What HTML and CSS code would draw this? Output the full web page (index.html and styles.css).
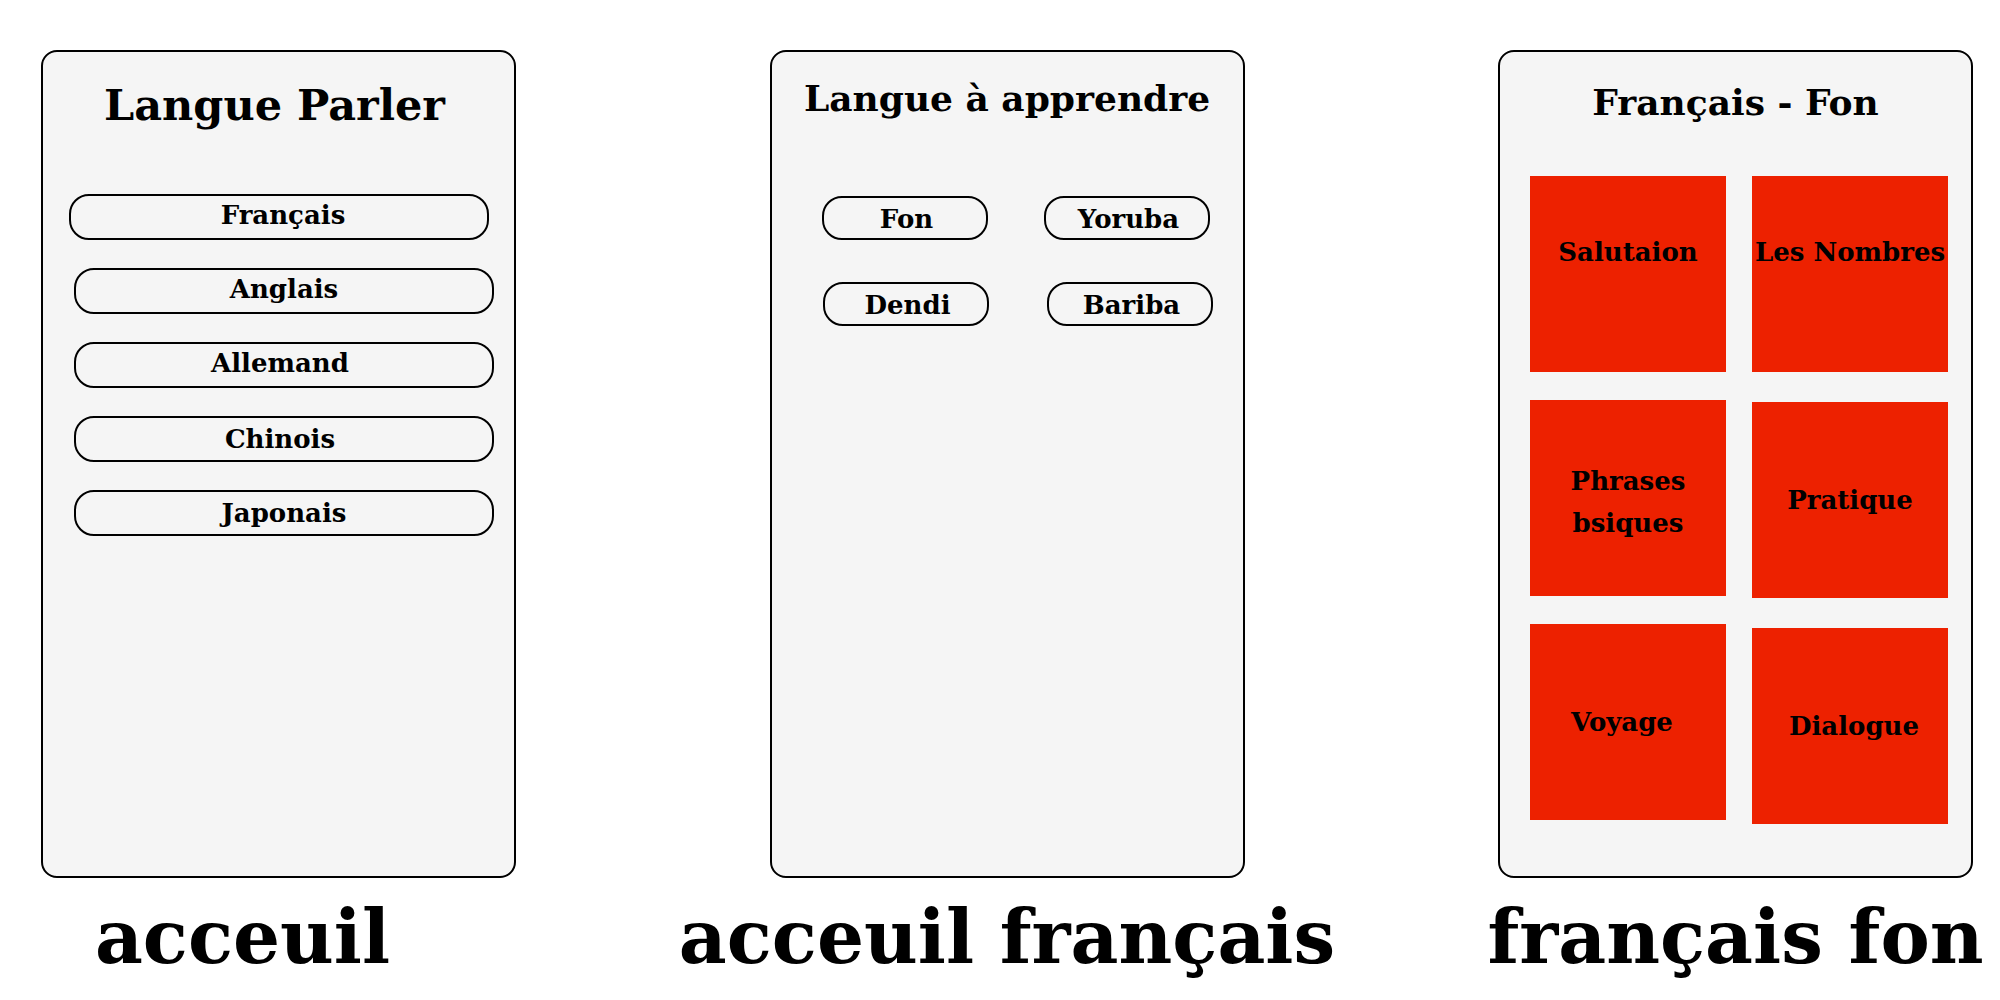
FILE: index.html
```html
<!DOCTYPE html>
<html lang="fr">
<head>
  <meta charset="utf-8">
  <meta name="viewport" content="width=device-width, initial-scale=1">
  <title>acceuil</title>
  <link rel="stylesheet" href="styles.css">
</head>
<body>
  <main class="board">
    <section class="screen">
      <div class="card">
        <h1 class="title title-large">Langue Parler</h1>
        <div class="choices">
          <button type="button" class="pill choice choice-first text-high nudge-right">Français</button>
          <button type="button" class="pill choice text-high">Anglais</button>
          <button type="button" class="pill choice text-high nudge-left">Allemand</button>
          <button type="button" class="pill choice nudge-left">Chinois</button>
          <button type="button" class="pill choice">Japonais</button>
        </div>
      </div>
      <h2 class="caption caption-home">acceuil</h2>
    </section>

    <section class="screen">
      <div class="card">
        <h1 class="title title-learn">Langue à apprendre</h1>
        <div class="languages">
          <button type="button" class="pill language">Fon</button>
          <button type="button" class="pill language">Yoruba</button>
          <button type="button" class="pill language language-end">Dendi</button>
          <button type="button" class="pill language language-end">Bariba</button>
        </div>
      </div>
      <h2 class="caption">acceuil français</h2>
    </section>

    <section class="screen">
      <div class="card">
        <h1 class="title title-lesson">Français - Fon</h1>
        <div class="lessons">
          <div class="lesson-column">
            <button type="button" class="tile tile-raised">Salutaion</button>
            <button type="button" class="tile tile-lines">Phrases<br>bsiques</button>
            <button type="button" class="tile tile-left">Voyage</button>
          </div>
          <div class="lesson-column lesson-column-loose">
            <button type="button" class="tile tile-raised">Les Nombres</button>
            <button type="button" class="tile">Pratique</button>
            <button type="button" class="tile nudge-right">Dialogue</button>
          </div>
        </div>
      </div>
      <h2 class="caption">français fon</h2>
    </section>
  </main>
</body>
</html>
```
FILE: styles.css
```css
* {
  box-sizing: border-box;
}

body {
  margin: 0;
  background: #ffffff;
  color: #000000;
  font-family: Rockwell, "DejaVu Serif", serif;
  font-weight: 700;
}

.board {
  display: grid;
  grid-template-columns: repeat(3, minmax(0, 475px));
  justify-content: space-between;
  padding: 50px 27px 0 41px;
}

.card {
  min-height: 828px;
  border: 2px solid #000000;
  border-radius: 16px;
  background: #f5f5f5;
}

.title {
  margin: 0;
  font-size: 36px;
  line-height: 48px;
  text-align: center;
  white-space: nowrap;
}

.title-large {
  padding: 24px 8px 60px 0;
  font-size: 43px;
  line-height: 58px;
}

.title-learn {
  padding: 22px 0 74px;
}

.title-lesson {
  padding: 26px 0 50px;
}

.caption {
  display: flex;
  justify-content: center;
  margin: 15px 0 0;
  font-size: 74px;
  line-height: 88px;
  white-space: nowrap;
}

.caption-home {
  padding-right: 72px;
}

/* Rounded outline buttons */
.pill {
  display: flex;
  align-items: center;
  justify-content: center;
  padding: 0;
  border: 2px solid #000000;
  border-radius: 20px;
  background: transparent;
  color: inherit;
  font: inherit;
  font-size: 26px;
  line-height: 32px;
}

.choices {
  display: grid;
  gap: 28px;
  margin: 0 20px 0 26px;
}

.choice {
  justify-self: end;
  width: calc(100% - 5px);
  height: 46px;
}

.choice-first {
  justify-self: start;
}

.text-high {
  padding-bottom: 4px;
}

.nudge-right {
  padding-left: 8px;
}

.nudge-left {
  padding-right: 8px;
}

.languages {
  display: grid;
  grid-template-columns: 167fr 169fr;
  gap: 42px 55px;
  margin: 0 30px 0 50px;
}

.language {
  width: 166px;
  max-width: 100%;
  height: 44px;
  padding: 2px 0 0 4px;
}

.language-end {
  justify-self: end;
}

/* Lesson tiles */
.lessons {
  display: grid;
  grid-template-columns: 1fr 1fr;
  align-items: start;
  gap: 26px;
  margin: 0 23px 0 30px;
}

.lesson-column {
  display: grid;
  gap: 28px;
}

.lesson-column-loose {
  gap: 30px;
}

.tile {
  display: flex;
  align-items: center;
  justify-content: center;
  width: 100%;
  aspect-ratio: 1;
  padding: 0;
  border: 0;
  background: #ed2100;
  color: inherit;
  font: inherit;
  font-size: 26px;
  line-height: 42px;
}

.tile-raised {
  padding-bottom: 44px;
}

.tile-lines {
  padding-top: 8px;
}

.tile-left {
  padding-right: 12px;
}

.tile.nudge-right {
  padding-left: 8px;
}
```
